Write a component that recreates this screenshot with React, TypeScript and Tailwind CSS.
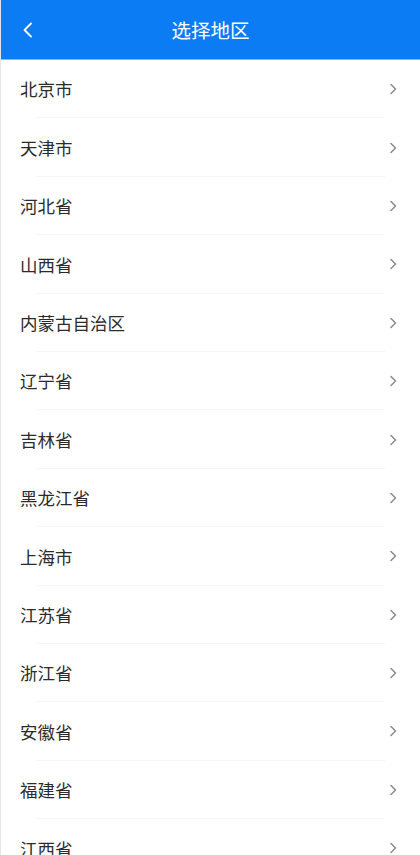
const regions = [
  '北京市', '天津市', '河北省', '山西省', '内蒙古自治区', '辽宁省', '吉林省',
  '黑龙江省', '上海市', '江苏省', '浙江省', '安徽省', '福建省', '江西省',
]

function Arrow() {
  return (
    <svg width="8" height="12" viewBox="0 0 8 12" fill="none" className="shrink-0">
      <path d="M2 1.5 L6.5 6 L2 10.5" stroke="#8a8a8a" strokeWidth="1.5" strokeLinecap="round" strokeLinejoin="round" />
    </svg>
  )
}

export default function App() {
  return (
    <div
      className="w-[420px] h-[855px] overflow-hidden bg-white border-l border-[#e4e4e4]"
      style={{ fontFamily: '"Noto Sans CJK SC", "Noto Sans", sans-serif' }}
    >
      <header className="h-[60px] bg-[#0b7cf3] border-b border-[#7cbaf8] flex items-center relative">
        <button className="absolute left-[20px] top-[22px]">
          <svg width="14" height="16" viewBox="0 0 14 16" fill="none">
            <path d="M10 1.5 L3.5 8 L10 14.5" stroke="white" strokeWidth="1.8" strokeLinecap="round" strokeLinejoin="round" />
          </svg>
        </button>
        <h1 className="w-full text-center text-white text-[19.5px] leading-none">选择地区</h1>
      </header>

      <ul>
        {regions.map((name) => (
          <li key={name} className="h-[58.4px] relative flex items-center pl-[19px] pr-[23px]">
            <span className="flex-1 text-[17.5px] text-[#2b2b2b] leading-none">{name}</span>
            <Arrow />
            <div className="absolute left-[35px] right-[35px] bottom-0 h-px bg-[#f6f6f6]" />
          </li>
        ))}
      </ul>
    </div>
  )
}
